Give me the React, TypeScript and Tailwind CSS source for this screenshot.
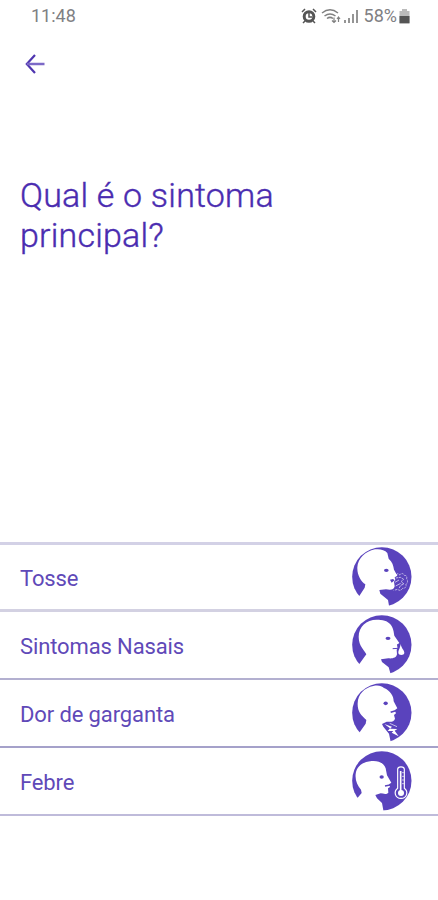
import React from 'react';

type Symptom = 'cough' | 'nose' | 'throat' | 'fever';

interface SymptomItem {
  id: Symptom;
  label: string;
  rowClass: string;
}

const symptoms: SymptomItem[] = [
  { id: 'cough', label: 'Tosse', rowClass: 'h-[67px] border-t-[3px] border-[#d3d1e6]' },
  { id: 'nose', label: 'Sintomas Nasais', rowClass: 'h-[69px] border-t-[3px] border-[#d3d1e2]' },
  { id: 'throat', label: 'Dor de garganta', rowClass: 'h-[68px] border-t-2 border-[#b3b0d0]' },
  { id: 'fever', label: 'Febre', rowClass: 'h-[70px] border-t-2 border-b-2 border-t-[#a5a1ca] border-b-[#bfbbda]' },
];

const heads: Record<Symptom, string> = {
  cough:
    'M45 167 L61 142 L63 132 C50 124 38 104 39 81 C41 54 62 33 92 27 C106 25 121 28 129 38 L133 55 C144 64 147 75 149 88 L159 106 L151 111 L153 119 L149 124 L151 138 C149 149 139 149 125 147 L105 149 L108 160 L131 179 L134 196 L134 210 L20 210 L20 167 Z',
  nose:
    'M45 167 L66 138 C62 126 43 115 43 85 C43 55 66 34 97 34 C114 34 130 37 138 48 C148 60 148 72 150 82 L165 104 L158 109 L161 119 L157 124 L158 138 C156 149 145 151 132 150 L110 153 L113 161 L133 177 L138 194 L140 210 L20 210 L20 167 Z',
  throat:
    'M45 169 L64 142 L66 131 C50 117 39 105 40 81 C41 54 60 34 87 29 C102 26 112 29 119 35 C138 43 148 59 148 75 L159 96 L151 102 L155 111 L149 116 L152 127 C149 138 139 136 127 136 L113 143 L117 151 L134 172 L139 196 L139 210 L20 210 L20 169 Z',
  fever:
    'M40 160 L52 146 L50 136 C39 123 32 108 34 89 C37 66 53 53 82 50 C103 48 119 57 124 72 L128 93 L141 115 L134 120 L137 128 L131 132 L132 145 C127 151 117 148 109 147 L93 152 L98 162 L113 176 L117 198 L117 210 L20 210 L20 160 Z',
};

const details: Record<Symptom, React.ReactNode> = {
  cough: (
    <>
      <ellipse cx="126" cy="90" rx="7" ry="5" fill="#5a43bd" />
      <path d="M137 118 l9 -2 l5 4 l-9 7 z" fill="#5a43bd" />
      <g fill="none" stroke="#fff" strokeWidth="2.5" opacity="0.75">
        <path d="M155 104 q7 -8 11 0 q9 -9 14 1 q9 0 7 10 q6 10 -2 17 q2 12 -10 12 q-8 10 -15 3 l-12 3" strokeDasharray="7 3" />
        <path d="M154 113 l14 -2 l10 6 l-8 7 l9 7 l-10 4 l-5 9" strokeDasharray="8 2" />
        <path d="M152 126 l12 -7 M154 137 l15 -8" />
      </g>
    </>
  ),
  nose: (
    <>
      <ellipse cx="131" cy="90" rx="7.5" ry="5" fill="#5a43bd" />
      <path d="M145 121 L162 120" stroke="#5a43bd" strokeWidth="3" />
      <path d="M161 107 V132" stroke="#5a43bd" strokeWidth="3" />
      <path d="M169 106 C170 119 180 125 180 133 C180 142 162 142 162 133 C162 125 168 119 169 106 Z" fill="#fff" />
    </>
  ),
  throat: (
    <>
      <ellipse cx="124" cy="81" rx="6.5" ry="5.5" fill="#5a43bd" />
      <path d="M139 108 L154 103" stroke="#5a43bd" strokeWidth="5" />
      <path d="M120 143 L143 151 L137 157 L159 158 L151 163 L163 180 L142 169 L147 164 L130 164 L137 156 Z" fill="#fff" />
      <path d="M136 141 L158 151" stroke="#fff" strokeWidth="2" />
    </>
  ),
  fever: (
    <>
      <ellipse cx="112" cy="98" rx="6.5" ry="5" fill="#5a43bd" />
      <path d="M122 125 L137 122" stroke="#5a43bd" strokeWidth="4" />
      <path
        d="M160 132 V75 C160 65 180 65 180 75 V132 C193 142 188 162 170 162 C152 162 147 142 160 132 Z"
        fill="none"
        stroke="#fff"
        strokeWidth="3.5"
      />
      <circle cx="170" cy="146" r="9" fill="#fff" />
      <path d="M169 146 V80" stroke="#fff" strokeWidth="5" />
      <path d="M173 85 h6 M173 96 h6 M173 107 h6 M173 118 h6" stroke="#fff" strokeWidth="2" />
    </>
  ),
};

const SymptomIcon: React.FC<{ id: Symptom }> = ({ id }) => (
  <svg viewBox="23 20 180 180" className="h-[60px] w-[60px] shrink-0">
    <circle cx="112.5" cy="109.5" r="89" fill="#5a43bd" />
    <path d={heads[id]} fill="#fff" />
    {details[id]}
  </svg>
);

const StatusBar: React.FC = () => (
  <div className="flex h-8 items-center justify-between pl-[31px] pr-[28px] text-[#808083]">
    <span className="text-[18px] leading-none">11:48</span>
    <div className="flex items-center">
      {/* Alarm */}
      <svg viewBox="0 0 16 16" className="h-4 w-4" fill="none" stroke="#555" strokeWidth="2">
        <circle cx="8" cy="8.5" r="4.8" strokeWidth="3" />
        <path d="M8 5v4l3 0M1 4l3-3M15 4l-3-3M4 13l-2 2M12 13l2 2" strokeWidth="1.5" />
      </svg>
      {/* Wi-Fi */}
      <svg viewBox="0 0 20 16" className="ml-[4px] h-4 w-5" fill="none" stroke="#808080" strokeWidth="1.5">
        <path d="M1 5c5-4 11-4 16 0M3.500 8c4-3 7-3 11 0M6 10.500c2-1.500 4-1.500 6 0" />
        <path d="M13 9.500v5M11 12.500l2 2 2-2M17.500 14V9M16 11l1.500-2 1.500 2" strokeWidth="1.200" />
      </svg>
      {/* Signal */}
      <svg viewBox="0 0 15 15" className="ml-[3px] h-[15px] w-[15px]" fill="#959595">
        <path d="M0 11h2v3H0zM4 9h2v5H4zM8 5h2v9H8zM12 1h2v13h-2z" />
      </svg>
      <span className="ml-[5px] text-[18px] leading-none">58%</span>
      {/* Battery */}
      <svg viewBox="0 0 11 15" className="ml-[2px] h-[15px] w-[11px]">
        <path d="M3 0h5v2h2.500v13H0.500V2H3z" fill="#bbb" />
        <path d="M0.500 7h10v7h-10z" fill="#555" />
      </svg>
    </div>
  </div>
);

const App: React.FC = () => {
  return (
    <div className="flex h-[900px] w-full flex-col overflow-hidden bg-white font-['Roboto',sans-serif]">
      <StatusBar />

      <header className="flex h-16 items-center pl-[25px]">
        <button aria-label="Voltar">
          <svg viewBox="0 0 20 20" className="h-5 w-5" fill="none" stroke="#4f36b0" strokeWidth="2.200">
            <path d="M10 1L1.800 10L10 19" />
            <path d="M1.800 10H19.500" stroke="#7c69c7" strokeWidth="2.500" />
          </svg>
        </button>
      </header>

      <h1 className="mt-[79px] pl-5 text-[34px] leading-[40px] font-light tracking-[0.2px] text-[#4a2cb0] [-webkit-text-stroke:0.4px_#4a2cb0]">
        Qual é o sintoma
        <br />
        principal?
      </h1>

      <ul className="mt-auto mb-[84px]">
        {symptoms.map((item) => (
          <li key={item.id} className={`flex items-center justify-between pr-[26px] pl-5 ${item.rowClass}`}>
            <span className="pt-1 text-[22px] leading-none tracking-[-0.12px] text-[#6049b8]">{item.label}</span>
            <SymptomIcon id={item.id} />
          </li>
        ))}
      </ul>
    </div>
  );
};

export default App;
